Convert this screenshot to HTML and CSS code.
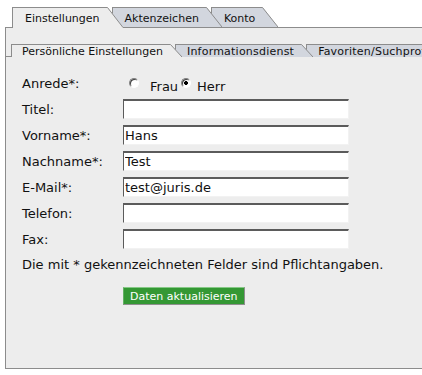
FILE: index.html
```html
<!DOCTYPE html>
<html lang="de">
<head>
<meta charset="utf-8">
<title>Einstellungen</title>
<link rel="stylesheet" href="styles.css">
</head>
<body>
<div class="page">
  <nav class="tabs tabs--main">
    <div class="tab tab--active"><span class="tab-label">Einstellungen</span><svg class="wedge" width="16" height="21" viewBox="0 0 16 21"><path class="wedge-fill" d="M0 0H0.5L16 20.5V21H0Z"/><path class="wedge-line" d="M0 0.5H0.5L16 20.5"/></svg></div>
    <div class="tab"><span class="tab-label">Aktenzeichen</span><svg class="wedge" width="16" height="20" viewBox="0 0 16 20"><path class="wedge-fill" d="M0 0H0.5L16 20H0Z"/><path class="wedge-line" d="M0 0.5H0.5L16 20"/></svg></div>
    <div class="tab"><span class="tab-label">Konto</span><svg class="wedge" width="16" height="20" viewBox="0 0 16 20"><path class="wedge-fill" d="M0 0H0.5L16 20H0Z"/><path class="wedge-line" d="M0 0.5H0.5L16 20"/></svg></div>
  </nav>
  <section class="panel">
    <nav class="tabs tabs--sub">
      <div class="tabs-lead"></div>
      <div class="tab tab--active"><span class="tab-label">Persönliche Einstellungen</span><svg class="wedge" width="12" height="13" viewBox="0 0 12 13"><path class="wedge-fill" d="M0 0H0.5L12 13H0Z"/><path class="wedge-line" d="M0 0.5H0.5L12 13"/></svg></div>
      <div class="tab"><span class="tab-label">Informationsdienst</span><svg class="wedge" width="12" height="13" viewBox="0 0 12 13"><path class="wedge-fill" d="M0 0H0.5L12 13H0Z"/><path class="wedge-line" d="M0 0.5H0.5L12 13"/></svg></div>
      <div class="tab tab--flush"><span class="tab-label">Favoriten/Suchprofile</span></div>
    </nav>
    <div class="content">
      <form class="form">
        <span class="label">Anrede*:</span>
        <div class="radios">
          <input class="radio" type="radio" name="anrede" id="frau">
          <label class="radio-text radio-text--first" for="frau">Frau</label>
          <input class="radio radio--second" type="radio" name="anrede" id="herr" checked>
          <label class="radio-text" for="herr">Herr</label>
        </div>
        <label class="label" for="titel">Titel:</label>
        <input class="field" id="titel" type="text" value="">
        <label class="label" for="vorname">Vorname*:</label>
        <input class="field" id="vorname" type="text" value="Hans">
        <label class="label" for="nachname">Nachname*:</label>
        <input class="field" id="nachname" type="text" value="Test">
        <label class="label" for="email">E-Mail*:</label>
        <input class="field" id="email" type="text" value="test@juris.de">
        <label class="label" for="telefon">Telefon:</label>
        <input class="field" id="telefon" type="text" value="">
        <label class="label" for="fax">Fax:</label>
        <input class="field" id="fax" type="text" value="">
      </form>
      <p class="note">Die mit * gekennzeichneten Felder sind Pflichtangaben.</p>
      <div class="actions">
        <button class="btn" type="button">Daten aktualisieren</button>
      </div>
    </div>
  </section>
</div>
</body>
</html>
```

FILE: styles.css
```css
* {
  box-sizing: border-box;
}

html,
body {
  margin: 0;
  padding: 0;
  background: #ffffff;
  overflow: hidden;
}

body {
  width: 422px;
  height: 375px;
  font-family: "DejaVu Sans", Verdana, sans-serif;
  color: #111111;
}

.page {
  padding: 7px 0 0 5px;
}

/* ---------- tabs ---------- */
.tabs {
  display: flex;
  align-items: flex-start;
  position: relative;
  z-index: 2;
  white-space: nowrap;
}

.tab {
  display: flex;
  flex: none;
  position: relative;
}

.tab:nth-child(1) { z-index: 6; }
.tab:nth-child(2) { z-index: 5; }
.tab:nth-child(3) { z-index: 4; }
.tab:nth-child(4) { z-index: 3; }

.tab-label {
  display: block;
  font-size: 11px;
  color: #111111;
  background: #d2d6de;
  border-top: 1px solid #8c8c8c;
  border-left: 1px solid #8c8c8c;
}

.tab--active .tab-label {
  background: #ededed;
}

.wedge {
  display: block;
  flex: none;
}

.wedge-fill {
  fill: #d2d6de;
}

.tab--active .wedge-fill {
  fill: #ededed;
}

.wedge-line {
  fill: none;
  stroke: #8c8c8c;
  stroke-width: 1;
}

.tabs--main {
  height: 20px;
  padding-left: 7px;
}

.tabs--main .tab-label {
  height: 20px;
  line-height: 13px;
  padding: 4px 7px 0 12px;
}

.tabs--main .tab--active .tab-label {
  height: 21px;
}

.tabs--main .tab + .tab {
  margin-left: -11px;
}

.tabs--sub {
  height: 13px;
}

.tabs-lead {
  flex: none;
  width: 5px;
  height: 13px;
  border-bottom: 1px solid #8c8c8c;
}

.tabs--sub .tab-label {
  height: 13px;
  line-height: 14px;
  padding: 0 7px 0 10px;
}

.tabs--sub .tab + .tab {
  margin-left: -7px;
}

.tabs--sub .tab + .tab .tab-label {
  letter-spacing: 0.22px;
  padding-left: 11px;
}

.tabs--sub .tab--flush {
  margin-left: 0;
}

.tabs--sub .tab--flush .tab-label {
  padding-left: 4px;
}

/* ---------- panel ---------- */
.panel {
  height: 342px;
  padding-top: 16px;
  background: #ededed;
  border-top: 1px solid #8c8c8c;
  border-left: 1px solid #8c8c8c;
  border-bottom: 1px solid #8c8c8c;
}

.content {
  padding-left: 16px;
  font-size: 13px;
}

.form {
  display: grid;
  grid-template-columns: 101px 226px;
  grid-auto-rows: 20px;
  row-gap: 6px;
  margin: 16px 0 0 0;
}

.label {
  line-height: 22px;
  white-space: nowrap;
}

.field {
  width: 226px;
  height: 20px;
  margin: 0;
  padding: 0 0 0 1px;
  border-style: solid;
  border-width: 2px 1px 1px 1px;
  border-color: #5b5b5b #f2f2f2 #f2f2f2 #5b5b5b;
  background: #ffffff;
  font: 13px "DejaVu Sans", Verdana, sans-serif;
  color: #111111;
  outline: none;
}

.radios {
  display: flex;
  align-items: flex-start;
}

.radio {
  -webkit-appearance: none;
  appearance: none;
  flex: none;
  width: 10px;
  height: 10px;
  margin: 5px 0 0 6px;
  border-radius: 50%;
  border: 1px solid;
  border-color: #808080 #ffffff #ffffff #808080;
  box-shadow: inset 1px 1px 0 #404040;
  background: #ffffff;
}

.radio:checked {
  background: radial-gradient(circle, #000000 0 1.6px, #ffffff 2.2px);
}

.radio--second {
  margin-left: 3px;
}

.radio-text {
  line-height: 16px;
  margin: 6px 0 0 6px;
}

.radio-text--first {
  margin-left: 11px;
}

.note {
  margin: 8px 0 0 0;
  line-height: 16px;
  white-space: nowrap;
}

.actions {
  margin-top: 14px;
  padding-left: 101px;
}

.btn {
  display: block;
  height: 18px;
  margin: 0;
  padding: 2px 6px 0 6px;
  font: 11px/14px "DejaVu Sans", Verdana, sans-serif;
  color: #ffffff;
  background: #349834;
  border: 1px solid;
  border-color: #86c986 #8e8e8e #8e8e8e #62b062;
  border-radius: 0;
}
```
